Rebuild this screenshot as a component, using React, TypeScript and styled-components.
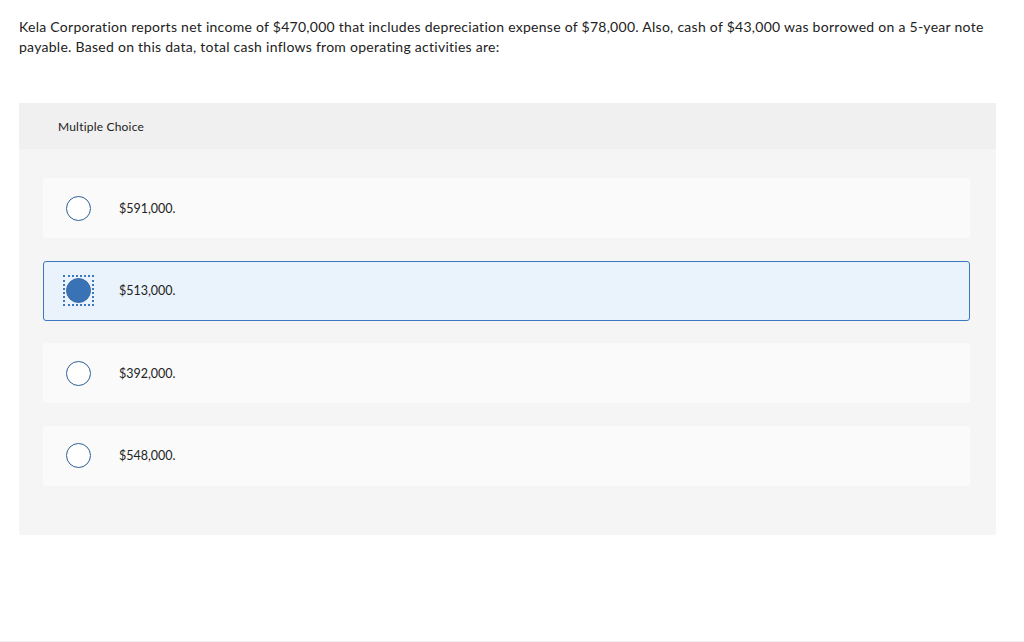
import React from "react";
import styled, { createGlobalStyle } from "styled-components";

const GlobalStyle = createGlobalStyle`
  html, body {
    margin: 0;
    padding: 0;
    background: #ffffff;
  }
  body {
    font-family: "Lato", "Liberation Sans", sans-serif;
    color: #1a1a1a;
  }
`;

const Page = styled.div`
  box-sizing: border-box;
  height: 642px;
  padding: 17px 28px 0 19px;
  border-bottom: 1px solid #eeeeee;
`;

const Question = styled.p`
  margin: 0 0 46px 0;
  font-size: 14px;
  line-height: 20px;
  letter-spacing: 0.27px;
  color: #222222;
`;

const Panel = styled.div`
  background: #f5f5f5;
  border-radius: 2px;
  padding-bottom: 49px;
`;

const PanelHeader = styled.div`
  height: 46px;
  display: flex;
  align-items: center;
  padding-left: 39px;
  background: #f0f0f0;
  font-size: 12px;
  letter-spacing: 0.2px;
  color: #222222;
`;

const Options = styled.div`
  display: flex;
  flex-direction: column;
  gap: 22.67px;
  padding: 29px 26px 0 24px;
`;

const Option = styled.label<{ $selected?: boolean }>`
  box-sizing: border-box;
  height: 60px;
  display: flex;
  align-items: center;
  gap: 28px;
  padding-left: 22px;
  border-radius: 3px;
  border: 1px solid ${(p) => (p.$selected ? "#3a78c2" : "transparent")};
  background: ${(p) => (p.$selected ? "#eaf2fb" : "#fafafa")};
  cursor: pointer;
`;

const FocusRing = styled.span<{ $on?: boolean }>`
  display: inline-flex;
  padding: 2px;
  margin: -2px;
  outline: ${(p) => (p.$on ? "2px dotted #3a78c2" : "none")};
  outline-offset: -1px;
`;

const Radio = styled.span<{ $checked?: boolean }>`
  box-sizing: border-box;
  width: 25px;
  height: 25px;
  flex: none;
  border-radius: 50%;
  border: 1.5px solid ${(p) => (p.$checked ? "#3a6ca8" : "#2e5f95")};
  background: ${(p) => (p.$checked ? "#3a73b5" : "#ffffff")};
`;

const OptionText = styled.span`
  font-size: 12.5px;
  color: #222222;
`;

const choices = ["$591,000.", "$513,000.", "$392,000.", "$548,000."];

const App = () => {
  const selected = 1;
  return (
    <>
      <GlobalStyle />
      <Page>
        <Question>
          Kela Corporation reports net income of $470,000 that includes depreciation expense of $78,000.
          Also, cash of $43,000 was borrowed on a 5-year note payable. Based on this data, total cash
          inflows from operating activities are:
        </Question>
        <Panel>
          <PanelHeader>Multiple Choice</PanelHeader>
          <Options>
            {choices.map((c, idx) => (
              <Option key={c} $selected={idx === selected}>
                <FocusRing $on={idx === selected}>
                  <Radio $checked={idx === selected} />
                </FocusRing>
                <OptionText>{c}</OptionText>
              </Option>
            ))}
          </Options>
        </Panel>
      </Page>
    </>
  );
};

export default App;
